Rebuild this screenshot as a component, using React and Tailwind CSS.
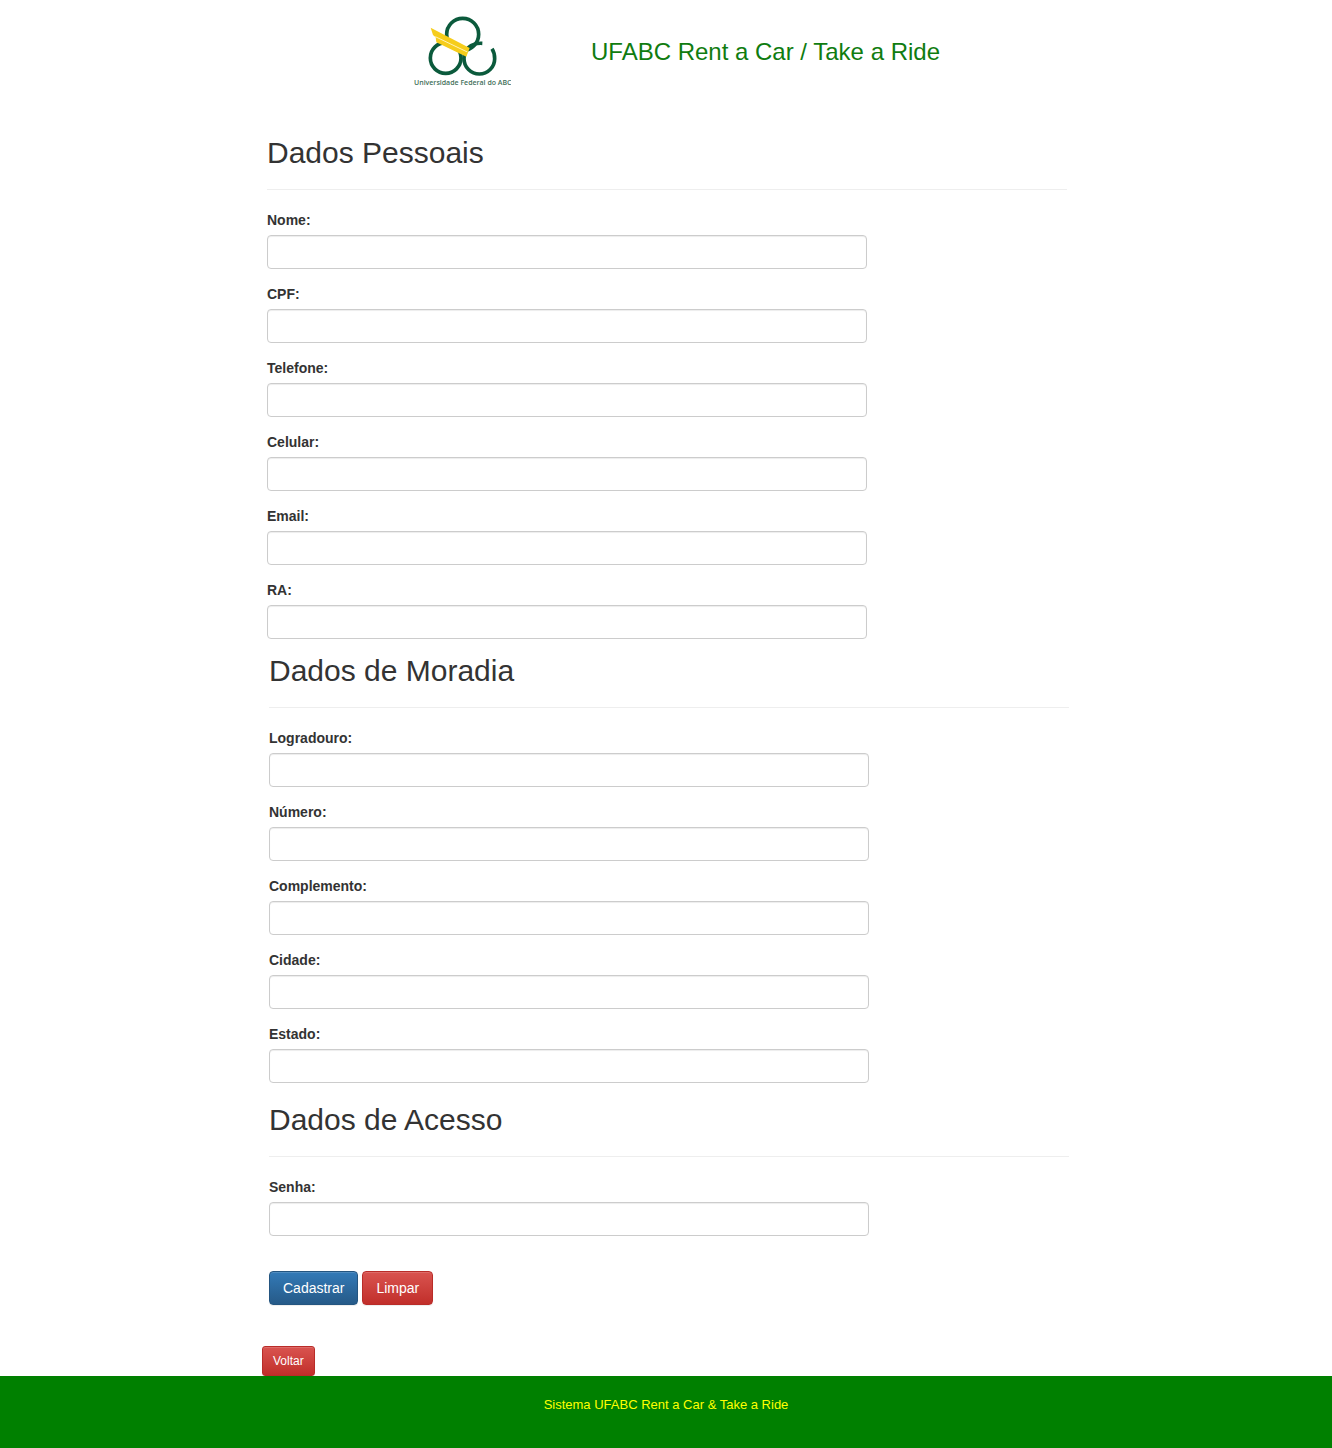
function Logo() {
  return (
    <svg className="h-[71px] w-[97px] shrink-0" viewBox="27 24 291 213" role="img" aria-label="Universidade Federal do ABC">
      <g fill="none" stroke="#0b5a3c" strokeWidth="11">
        <circle cx="173" cy="79" r="48" />
        <circle cx="122" cy="150" r="46" />
        <path d="M232 106C214 105 200 110 191 118C182 126 177 138 177 152A46 46 0 0 0 269 152C269 140 267 131 261 122" />
      </g>
      <path d="M77 59L194 120L184 146L94 103L92 88L84 81Z" fill="#f6cd1b" />
      <path d="M91 86L187 132" stroke="#fff3b8" strokeWidth="3" fill="none" />
      <text x="27" y="231" fontSize="21" fontWeight="600" fill="#3f6f5a" fontFamily="'Open Sans', 'Noto Sans', sans-serif">
        Universidade Federal do ABC
      </text>
    </svg>
  );
}

function Field({ id, label, type = "text" }) {
  return (
    <div className="mb-[15px]">
      <label htmlFor={id} className="mb-[5px] block text-sm/5 font-bold">
        {label}
      </label>
      <input
        id={id}
        name={id}
        type={type}
        className="block h-[34px] w-full max-w-[600px] rounded border border-[#ccc] bg-white px-3 py-1.5 text-sm shadow-[inset_0_1px_1px_rgba(0,0,0,0.075)] outline-none focus:border-[#66afe9]"
      />
    </div>
  );
}

function SectionTitle({ children }) {
  return <h2 className="mb-5 border-b border-[#eee] pb-5 text-[30px]/[33px] font-medium">{children}</h2>;
}

const personal = [
  ["nome", "Nome:", "text"],
  ["cpf", "CPF:", "text"],
  ["telefone", "Telefone:", "tel"],
  ["celular", "Celular:", "tel"],
  ["email", "Email:", "email"],
  ["ra", "RA:", "text"],
];

const address = [
  ["logradouro", "Logradouro:"],
  ["numero", "Número:"],
  ["complemento", "Complemento:"],
  ["cidade", "Cidade:"],
  ["estado", "Estado:"],
];

const redButton =
  "cursor-pointer border border-[#b92c28] bg-linear-to-b from-[#d9534f] to-[#c12e2a] text-white shadow-[inset_0_1px_0_rgba(255,255,255,0.15),0_1px_1px_rgba(0,0,0,0.075)]";

export default function App() {
  return (
    <div className="bg-white font-['Liberation_Sans',Arial,sans-serif] text-sm/5 text-[#333]">
      <div className="mx-auto max-w-[808px]">
        <header className="flex items-center justify-center gap-20 pt-4 pl-[22px]">
          <Logo />
          <h1 className="text-2xl font-medium text-[#107c10]">UFABC Rent a Car / Take a Ride</h1>
        </header>

        <form className="mt-[49px]">
          <section className="pr-[3px] pl-[5px]">
            <SectionTitle>Dados Pessoais</SectionTitle>
            {personal.map(([id, label, type]) => (
              <Field key={id} id={id} label={label} type={type} />
            ))}
          </section>

          <section className="pr-px pl-[7px]">
            <SectionTitle>Dados de Moradia</SectionTitle>
            {address.map(([id, label]) => (
              <Field key={id} id={id} label={label} />
            ))}
          </section>

          <section className="pt-[5px] pr-px pl-[7px]">
            <SectionTitle>Dados de Acesso</SectionTitle>
            <Field id="senha" label="Senha:" type="password" />
            <div className="flex gap-1 pt-5">
              <button
                type="submit"
                className="h-[34px] cursor-pointer rounded border border-[#245580] bg-linear-to-b from-[#337ab7] to-[#265a88] px-[13px] text-sm/5 text-white shadow-[inset_0_1px_0_rgba(255,255,255,0.15),0_1px_1px_rgba(0,0,0,0.075)]"
              >
                Cadastrar
              </button>
              <button type="reset" className={`h-[34px] rounded px-[13px] text-sm/5 ${redButton}`}>
                Limpar
              </button>
            </div>
          </section>
        </form>

        <button type="button" className={`mt-[41px] block h-[30px] rounded-[3px] px-2.5 text-xs ${redButton}`}>
          Voltar
        </button>
      </div>

      <footer className="h-[72px] bg-[#008000] pt-[19px] text-center text-[13px]/5 text-[#ff0]">
        Sistema UFABC Rent a Car &amp; Take a Ride
      </footer>
    </div>
  );
}
